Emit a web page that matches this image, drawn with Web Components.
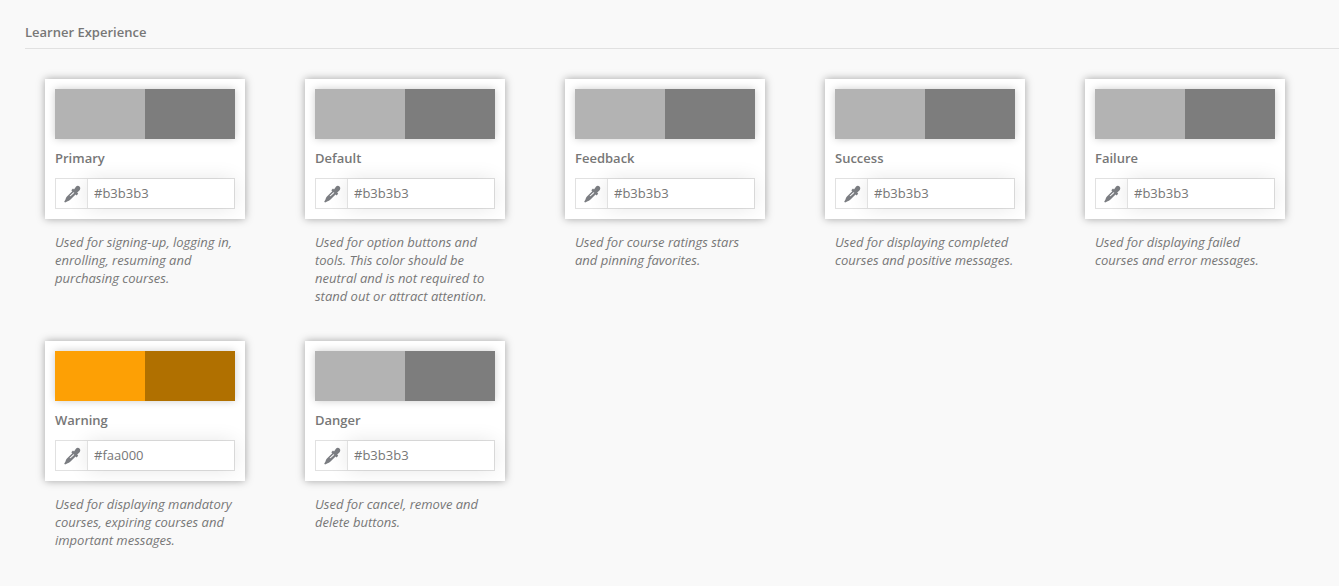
<!DOCTYPE html>
<html lang="en">
<head>
<meta charset="utf-8">
<title>Learner Experience</title>
<style>
  body {
    margin: 0;
    background: #f9f9f9;
    color: #777;
    font: 13px/18px "Open Sans", sans-serif;
  }
</style>
</head>
<body>
<settings-section heading="Learner Experience">
  <color-setting name="Primary" value="#b3b3b3" light="#b3b3b3" dark="#7d7d7d">Used for signing-up, logging in, enrolling, resuming and purchasing courses.</color-setting>
  <color-setting name="Default" value="#b3b3b3" light="#b3b3b3" dark="#7d7d7d">Used for option buttons and tools. This color should be neutral and is not required to stand out or attract attention.</color-setting>
  <color-setting name="Feedback" value="#b3b3b3" light="#b3b3b3" dark="#7d7d7d">Used for course ratings stars and pinning favorites.</color-setting>
  <color-setting name="Success" value="#b3b3b3" light="#b3b3b3" dark="#7d7d7d">Used for displaying completed courses and positive messages.</color-setting>
  <color-setting name="Failure" value="#b3b3b3" light="#b3b3b3" dark="#7d7d7d">Used for displaying failed courses and error messages.</color-setting>
  <color-setting name="Warning" value="#faa000" light="#fda005" dark="#b07000">Used for displaying mandatory courses, expiring courses and important messages.</color-setting>
  <color-setting name="Danger" value="#b3b3b3" light="#b3b3b3" dark="#7d7d7d">Used for cancel, remove and delete buttons.</color-setting>
</settings-section>

<template id="section-template">
  <style>
    :host { display: block; padding: 23px 0 36px 25px; }
    h2 {
      margin: 0;
      padding-bottom: 7px;
      border-bottom: 1px solid #e1e1e1;
      font-size: 13px;
      line-height: 18px;
      font-weight: 600;
    }
    .grid {
      display: grid;
      grid-template-columns: repeat(auto-fill, 200px);
      gap: 36px 60px;
      padding: 30px 20px 0;
    }
  </style>
  <h2></h2>
  <div class="grid"><slot></slot></div>
</template>

<template id="setting-template">
  <style>
    :host { display: block; }
    .card {
      padding: 10px;
      background: #fff;
      box-shadow: 0 0 8px rgba(0, 0, 0, .35);
    }
    color-swatch { margin-bottom: 10px; }
    label {
      display: block;
      margin-bottom: 11px;
      font-weight: 600;
    }
    .field {
      display: flex;
      height: 31px;
      box-sizing: border-box;
      border: 1px solid #e1e1e1;
    }
    button {
      display: flex;
      align-items: center;
      justify-content: center;
      width: 31px;
      padding: 0;
      border: 0;
      background: #fff;
      color: #7b7d82;
    }
    input {
      flex: 1;
      min-width: 0;
      padding: 0 6px 2px;
      border: 0;
      border-left: 1px solid #e1e1e1;
      border-radius: 0;
      background: #fff;
      color: inherit;
      font: inherit;
      box-shadow: 0 0 20px rgba(0, 0, 0, .1);
    }
    p {
      margin: 14px 10px 0;
      font-style: italic;
    }
  </style>
  <div class="card">
    <color-swatch></color-swatch>
    <label for="value"></label>
    <div class="field">
      <button type="button"><eyedropper-icon></eyedropper-icon></button>
      <input id="value" type="text" spellcheck="false">
    </div>
  </div>
  <p><slot></slot></p>
</template>

<template id="swatch-template">
  <style>
    :host {
      display: flex;
      height: 50px;
      box-shadow: 0 0 8px rgba(0, 0, 0, .2);
    }
    span { flex: 1; }
    .light { background: var(--light); }
    .dark { background: var(--dark); }
  </style>
  <span class="light"></span><span class="dark"></span>
</template>

<template id="eyedropper-template">
  <style>
    :host { display: block; width: 18px; height: 18px; }
    svg { display: block; }
  </style>
  <svg width="18" height="18" viewBox="0 0 18 18" aria-hidden="true">
    <path fill="currentColor" fill-rule="evenodd" d="M16.5 1.500c1.200 1.300.9 2.900-.1 3.900l-2.200 2.200 1 1.100-1.700 1.700-.9-.9-5.600 5.600c-.7.7-1.500 1-2.400 1.100l-2.500 1.400-.9-.9 1.400-2.500c.1-.9.400-1.700 1.100-2.400l5.600-5.600-1-1 1.700-1.700 1 1 2.100-2.900c1-1.200 2.400-1.200 3.400-.1zM10.400 7.200l-3.900 3.900 1 .2 3.900-3.500z"/>
  </svg>
</template>

<script>
  class TemplateElement extends HTMLElement {
    constructor() {
      super();
      const template = document.getElementById(this.constructor.template);
      this.attachShadow({ mode: "open" }).append(template.content.cloneNode(true));
    }
  }

  class SettingsSection extends TemplateElement {
    static template = "section-template";
    connectedCallback() {
      this.shadowRoot.querySelector("h2").textContent = this.getAttribute("heading");
    }
  }

  class ColorSwatch extends TemplateElement {
    static template = "swatch-template";
  }

  class EyedropperIcon extends TemplateElement {
    static template = "eyedropper-template";
  }

  class ColorSetting extends TemplateElement {
    static template = "setting-template";
    connectedCallback() {
      const root = this.shadowRoot;
      const name = this.getAttribute("name");
      root.querySelector("label").textContent = name;
      root.querySelector("input").value = this.getAttribute("value");
      root.querySelector("button").setAttribute("aria-label", "Pick " + name + " color");
      this.style.setProperty("--light", this.getAttribute("light"));
      this.style.setProperty("--dark", this.getAttribute("dark"));
    }
  }

  customElements.define("eyedropper-icon", EyedropperIcon);
  customElements.define("color-swatch", ColorSwatch);
  customElements.define("color-setting", ColorSetting);
  customElements.define("settings-section", SettingsSection);
</script>
</body>
</html>
